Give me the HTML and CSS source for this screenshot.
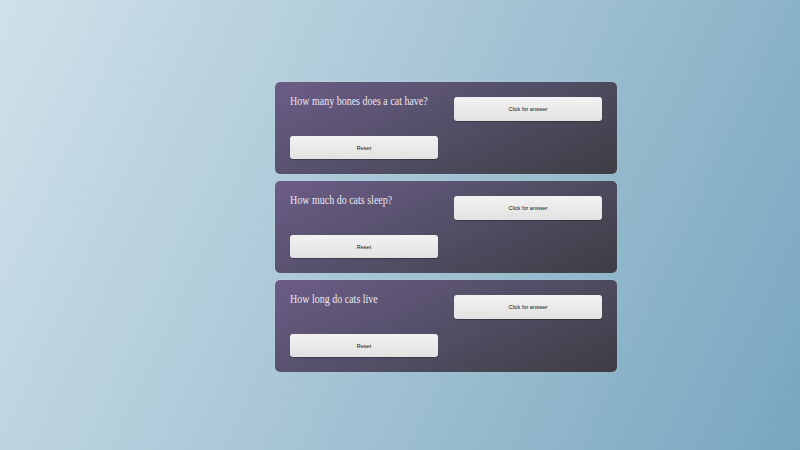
FILE: index.html
```html
<!DOCTYPE html>
<html>
<head>
<meta charset="utf-8">
<link rel="stylesheet" href="styles.css">
</head>
<body>
<main class="deck">
  <section class="card">
    <h2 class="question">How many bones does a cat have?</h2>
    <button class="btn answer">Click for answer</button>
    <button class="btn reset">Reset</button>
  </section>
  <section class="card">
    <h2 class="question">How much do cats sleep?</h2>
    <button class="btn answer">Click for answer</button>
    <button class="btn reset">Reset</button>
  </section>
  <section class="card">
    <h2 class="question">How long do cats live</h2>
    <button class="btn answer">Click for answer</button>
    <button class="btn reset">Reset</button>
  </section>
</main>
</body>
</html>
```

FILE: styles.css
```css
html, body {
  margin: 0;
  height: 100%;
}
body {
  background: linear-gradient(115deg, #cfe1e9 0%, #a9c7d6 45%, #78a6bf 100%);
  font-family: "Liberation Serif", serif;
}
.deck {
  display: flex;
  flex-direction: column;
  gap: 7px;
  width: 342px;
  padding: 82px 0 0 275px;
}
.card {
  display: grid;
  grid-template-columns: 148px 148px;
  grid-template-rows: 24px 23px;
  column-gap: 16px;
  row-gap: 15px;
  padding: 15px;
  border-radius: 5px;
  background: linear-gradient(155deg, #6c5c86 0%, #55506a 45%, #3e3d44 100%);
  box-shadow: 0 0 1px rgba(255,255,255,0.6);
}
.question {
  margin: -2px 0 0;
  font-size: 10px;
  font-weight: normal;
  color: #ece6f2;
  line-height: 10px;
  white-space: nowrap;
  transform: scaleY(1.3);
  transform-origin: top left;
}
.btn {
  font-family: "Liberation Sans", sans-serif;
  font-size: 5.5px;
  color: #111;
  border: none;
  border-radius: 3px;
  background: linear-gradient(#f2f2f2, #e2e2e2);
  box-shadow: 0 1px 1px rgba(0,0,0,0.3);
  padding: 0;
}
.reset {
  grid-column: 1;
  grid-row: 2;
}
```
